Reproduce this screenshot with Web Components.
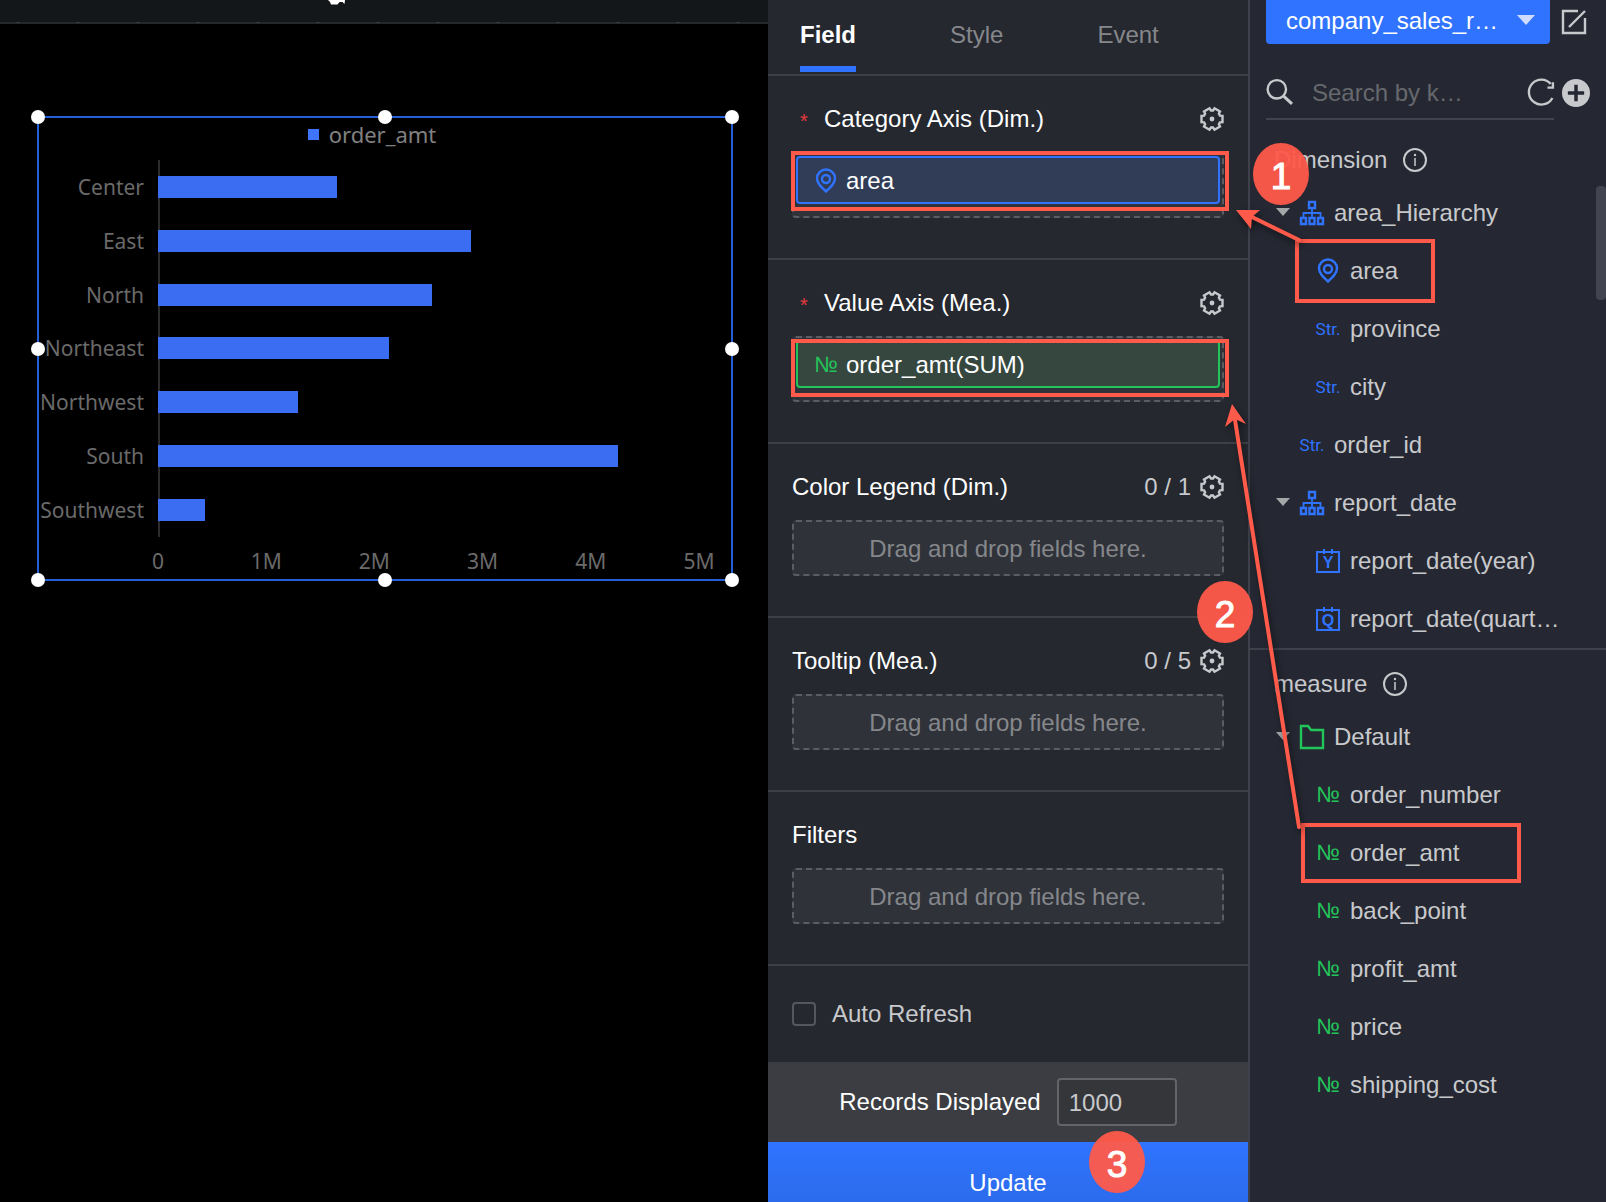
<!DOCTYPE html>
<html lang="en">
<head>
<meta charset="utf-8">
<title>Chart editor</title>
<style>
  body {
    margin: 0;
    background: #000;
    color: #c8c9cc;
    font: 24px/32px "Liberation Sans", Arial, sans-serif;
  }
</style>
</head>
<body>
<editor-app>
  <stage-canvas slot="stage">
    <selection-frame>
      <bar-chart series="order_amt" max="5000000"></bar-chart>
    </selection-frame>
  </stage-canvas>

  <config-panel slot="config">
    <field-section heading="Category Axis (Dim.)" required gear>
      <drop-zone filled><field-chip kind="dim" icon="pin">area</field-chip></drop-zone>
    </field-section>
    <field-section heading="Value Axis (Mea.)" required gear>
      <drop-zone filled><field-chip kind="mea" icon="number">order_amt(SUM)</field-chip></drop-zone>
    </field-section>
    <field-section heading="Color Legend (Dim.)" count="0 / 1" gear>
      <drop-zone>Drag and drop fields here.</drop-zone>
    </field-section>
    <field-section heading="Tooltip (Mea.)" count="0 / 5" gear>
      <drop-zone>Drag and drop fields here.</drop-zone>
    </field-section>
    <field-section heading="Filters">
      <drop-zone>Drag and drop fields here.</drop-zone>
    </field-section>
  </config-panel>

  <dataset-panel slot="dataset">
    <field-group heading="Dimension" scrollable>
      <field-row icon="hierarchy" parent>area_Hierarchy</field-row>
      <field-row icon="pin" level="2">area</field-row>
      <field-row icon="string" level="2">province</field-row>
      <field-row icon="string" level="2">city</field-row>
      <field-row icon="string">order_id</field-row>
      <field-row icon="hierarchy" parent>report_date</field-row>
      <field-row icon="year" level="2">report_date(year)</field-row>
      <field-row icon="quarter" level="2">report_date(quart…</field-row>
    </field-group>
    <field-group heading="measure">
      <field-row icon="folder" parent>Default</field-row>
      <field-row icon="number" level="2">order_number</field-row>
      <field-row icon="number" level="2">order_amt</field-row>
      <field-row icon="number" level="2">back_point</field-row>
      <field-row icon="number" level="2">profit_amt</field-row>
      <field-row icon="number" level="2">price</field-row>
      <field-row icon="number" level="2">shipping_cost</field-row>
    </field-group>
  </dataset-panel>

  <guide-overlay slot="guide"></guide-overlay>
</editor-app>

<script>
// Outline of a cog with six teeth, centred in a 24px box
function gearPath() {
  const points = [];
  for (let i = 0; i < 6; i++) {
    const mid = i * 60;
    [[-23, 8.6], [-17, 11], [17, 11], [23, 8.6]].forEach(([offset, radius]) => {
      const angle = (mid + offset) * Math.PI / 180;
      points.push(`${(12 + radius * Math.cos(angle)).toFixed(1)} ${(12 + radius * Math.sin(angle)).toFixed(1)}`);
    });
  }
  return `M${points.join('L')}Z`;
}

const CALENDAR = '<path d="M1 3h22v20H1zM8 0v5M16 0v5" fill="none" stroke="currentColor" stroke-width="2"/>';

const ICONS = {
  gear: `<path d="${gearPath()}" fill="none" stroke="currentColor" stroke-width="2.400"/><circle cx="12" cy="12" r="2.4" fill="currentColor"/>`,
  pin: '<path d="M12 22.500C7.500 18.500 3 14.500 3 9.500a9 9 0 0 1 18 0c0 5-4.500 9-9 13z" fill="none" stroke="currentColor" stroke-width="2.400"/><circle cx="12" cy="10" r="4" fill="none" stroke="currentColor" stroke-width="2.400"/>',
  hierarchy: '<path d="M9 1h6v6H9zM1 17h5v6H1zM9.500 17h5v6h-5zM18 17h5v6h-5z" fill="none" stroke="currentColor" stroke-width="2.400"/><path d="M12 8v8M3.500 16v-4h17v4" fill="none" stroke="currentColor" stroke-width="1.800"/>',
  folder: '<path d="M1 1h7l3 4h12v18H1z" fill="none" stroke="currentColor" stroke-width="2.400"/>',
  year: `${CALENDAR}<text x="12" y="19" text-anchor="middle" font-size="16" font-weight="bold" fill="currentColor">Y</text>`,
  quarter: `${CALENDAR}<text x="12" y="19" text-anchor="middle" font-size="16" font-weight="bold" fill="currentColor">Q</text>`,
  info: '<circle cx="12" cy="12" r="11" fill="none" stroke="currentColor" stroke-width="2"/><path d="M12 10v8" stroke="currentColor" stroke-width="1.500"/><circle cx="12" cy="7" r="1.200" fill="currentColor"/>',
  edit: '<path d="M16 1H1v22h22V8M7 17L23 1" fill="none" stroke="currentColor" stroke-width="2.400"/>',
  search: '<circle cx="10" cy="9.500" r="8.500" fill="none" stroke="currentColor" stroke-width="2.200"/><path d="M16 15.500l8 7.500" stroke="currentColor" stroke-width="2.800"/>',
  refresh: '<path d="M22.500 17.500A11.500 11.500 0 1 1 21 4.500" fill="none" stroke="currentColor" stroke-width="2.200"/><path d="M23 3v5h-5" fill="none" stroke="currentColor" stroke-width="2.200"/>',
  add: '<circle cx="12" cy="12" r="12" fill="currentColor"/><path d="M12 5v14M5 12h14" stroke="#252832" stroke-width="3"/>'
};

const TEXT_ICONS = { string: 'Str.', number: '№' };

const ICON_COLORS = {
  pin: '#2f73ff', hierarchy: '#2f73ff', string: '#2f73ff', year: '#2f73ff', quarter: '#2f73ff',
  folder: '#22c55a', number: '#22c55a'
};

class UiIcon extends HTMLElement {
  connectedCallback() {
    const name = this.getAttribute('name');
    const color = ICON_COLORS[name] || 'inherit';
    const body = TEXT_ICONS[name]
      ? `<span class="${name}">${TEXT_ICONS[name]}</span>`
      : `<svg viewBox="0 0 24 24" aria-hidden="true">${ICONS[name]}</svg>`;
    this.attachShadow({ mode: 'open' }).innerHTML = `
      <style>
        :host { display: flex; flex: none; align-items: center; justify-content: center; width: var(--icon-size, 24px); height: var(--icon-size, 24px); color: ${color}; }
        svg { width: 100%; height: 100%; overflow: visible; font-family: "Liberation Sans", Arial, sans-serif; }
        .string { font: 17px/24px Roboto, sans-serif; }
        .number { font: 22px/24px "Liberation Sans", Arial, sans-serif; }
      </style>
      ${body}
    `;
  }
}

class EditorApp extends HTMLElement {
  constructor() {
    super();
    this.attachShadow({ mode: 'open' }).innerHTML = `
      <style>
        :host { position: relative; display: grid; grid-template-columns: minmax(0, 1fr) 480px 358px; height: 100vh; overflow: hidden; }
      </style>
      <slot name="stage"></slot>
      <slot name="config"></slot>
      <slot name="dataset"></slot>
      <slot name="guide"></slot>
    `;
  }
}

class StageCanvas extends HTMLElement {
  constructor() {
    super();
    this.attachShadow({ mode: 'open' }).innerHTML = `
      <style>
        :host { display: block; background: #000; }
        header { position: relative; box-sizing: border-box; height: 24px; background: #141719; border-bottom: 2px solid #252728; }
        /* ruler marks along the lower edge */
        header::after { content: ""; position: absolute; left: 0; right: 0; bottom: -1px; height: 1px; background: repeating-linear-gradient(90deg, transparent 0 16px, #3c3e40 16px 20px, transparent 20px 60px); }
        header svg { position: absolute; left: 326px; top: 0; width: 20px; height: 8px; }
        .area { padding: 92px 35px 0 37px; }
      </style>
      <header>
        <svg viewBox="0 0 20 8" aria-hidden="true"><path d="M2 0h17l-.500 4-2-2h-3l-2 2.500H5L4 2z" fill="#fff"/></svg>
      </header>
      <div class="area"><slot></slot></div>
    `;
  }
}

class SelectionFrame extends HTMLElement {
  constructor() {
    super();
    const spots = [[0, 0], [50, 0], [100, 0], [0, 50], [100, 50], [0, 100], [50, 100], [100, 100]];
    const handles = spots.map(([x, y]) => `<i style="left:${x}%;top:${y}%"></i>`).join('');
    this.attachShadow({ mode: 'open' }).innerHTML = `
      <style>
        :host { position: relative; display: block; border: 2px solid #245fd8; height: 461px; }
        .handles { position: absolute; inset: -1px; }
        i { position: absolute; width: 14px; height: 14px; margin: -7px; border-radius: 50%; background: #fff; }
      </style>
      <slot></slot>
      <div class="handles">${handles}</div>
    `;
  }
}

class BarChart extends HTMLElement {
  connectedCallback() {
    const max = Number(this.getAttribute('max'));
    const rows = [
      ['Center', 1655000], ['East', 2890000], ['North', 2535000], ['Northeast', 2135000],
      ['Northwest', 1290000], ['South', 4250000], ['Southwest', 435000]
    ];
    this.attachShadow({ mode: 'open' }).innerHTML = `
      <style>
        :host { display: grid; grid-template: 32px 10px minmax(0, 1fr) 42px / 105px 14px minmax(0, 1fr) 32px; height: 100%; color: #6a6a6a; font: 21px/24px "Noto Sans", sans-serif; }
        .legend { grid-area: 1 / 1 / 2 / -1; display: flex; align-items: center; justify-content: center; gap: 10px; padding-right: 26px; color: #808080; font-size: 22px; }
        .legend::before { content: ""; width: 11px; height: 11px; background: #3f74ff; }
        .labels { grid-area: 3 / 1; display: grid; grid-auto-rows: 1fr; align-items: center; justify-items: end; }
        .labels span { white-space: nowrap; }
        .bars { grid-area: 3 / 3; display: grid; grid-auto-rows: 1fr; align-items: center; box-shadow: inset 2px 0 #2c2c2c; }
        .bars div { height: 22px; background: #3a6df2; }
        .ticks { grid-area: 4 / 3; display: flex; justify-content: space-between; padding-top: 12px; }
        .ticks span { display: flex; justify-content: center; width: 0; }
      </style>
      <div class="legend">${this.getAttribute('series')}</div>
      <div class="labels">${rows.map(([name]) => `<span>${name}</span>`).join('')}</div>
      <div class="bars">${rows.map(([, value]) => `<div style="width:${value / max * 100}%"></div>`).join('')}</div>
      <div class="ticks">${['0', '1M', '2M', '3M', '4M', '5M'].map(t => `<span>${t}</span>`).join('')}</div>
    `;
  }
}

class ConfigPanel extends HTMLElement {
  constructor() {
    super();
    this.attachShadow({ mode: 'open' }).innerHTML = `
      <style>
        :host { display: block; background: #25282f; }
        nav { display: flex; gap: 94px; box-sizing: border-box; height: 76px; padding: 0 32px; border-bottom: 2px solid #3d4044; }
        nav button { box-sizing: border-box; height: 72px; padding: 4px 0 0; border: 0; border-bottom: 6px solid transparent; background: none; color: #85878b; font: inherit; }
        nav .active { border-color: #2f73ff; color: #fff; font-weight: bold; }
        .refresh { display: flex; align-items: center; gap: 16px; height: 96px; padding: 0 24px; }
        .refresh input { appearance: none; box-sizing: border-box; width: 24px; height: 24px; margin: 0; border: 2px solid #55575c; border-radius: 4px; }
        .records { display: flex; align-items: center; justify-content: center; gap: 16px; height: 80px; background: #3b3d42; color: #fff; }
        .records input { box-sizing: border-box; width: 120px; height: 48px; padding: 2px 10px 0; border: 2px solid #626468; border-radius: 4px; background: #34363a; color: #c8c9cc; font: inherit; }
        .update { display: block; width: 100%; height: 80px; padding: 2px 0 0; border: 0; background: linear-gradient(#2f74ff, #2c6bec 75%); color: #fff; font: inherit; }
      </style>
      <nav>
        <button class="active">Field</button>
        <button>Style</button>
        <button>Event</button>
      </nav>
      <slot></slot>
      <div class="refresh">
        <input type="checkbox" id="auto"><label for="auto">Auto Refresh</label>
      </div>
      <div class="records">
        <label for="records">Records Displayed</label><input type="text" id="records" value="1000">
      </div>
      <button class="update">Update</button>
    `;
  }
}

class FieldSection extends HTMLElement {
  connectedCallback() {
    const star = this.hasAttribute('required') ? '<span class="star">*</span>' : '';
    const gear = this.hasAttribute('gear') ? '<button aria-label="Settings"><ui-icon name="gear"></ui-icon></button>' : '';
    this.attachShadow({ mode: 'open' }).innerHTML = `
      <style>
        :host { display: block; padding: 27px 24px 40px; border-bottom: 2px solid #3d4044; }
        header { display: flex; align-items: center; height: 32px; margin-bottom: 17px; }
        .star { box-sizing: border-box; width: 32px; padding: 4px 0 0 8px; color: #e5393c; font-size: 20px; line-height: 24px; }
        h2 { flex: 1; margin: 0; color: #fff; font: inherit; }
        button { display: flex; margin-left: 9px; padding: 0; border: 0; background: none; color: inherit; }
      </style>
      <header>${star}<h2>${this.getAttribute('heading')}</h2><span>${this.getAttribute('count') || ''}</span>${gear}</header>
      <slot></slot>
    `;
  }
}

class DropZone extends HTMLElement {
  constructor() {
    super();
    this.attachShadow({ mode: 'open' }).innerHTML = `
      <style>
        :host { display: block; box-sizing: border-box; padding: 11px 2px 9px; border: 2px dashed #5b5d62; border-radius: 4px; background: #2f3239; color: #85878b; text-align: center; }
        :host([filled]) { padding: 2px 2px 12px; text-align: left; }
      </style>
      <slot></slot>
    `;
  }
}

class FieldChip extends HTMLElement {
  connectedCallback() {
    this.attachShadow({ mode: 'open' }).innerHTML = `
      <style>
        :host { display: flex; align-items: center; gap: 8px; box-sizing: border-box; height: 48px; padding: 1px 16px 0; border: 2px solid #2f73ff; border-radius: 4px; background: #313c57; color: #fff; }
        :host([kind="mea"]) { border-color: #22c55a; background: #36473f; }
      </style>
      <ui-icon name="${this.getAttribute('icon')}"></ui-icon><slot></slot>
    `;
  }
}

class DatasetPanel extends HTMLElement {
  constructor() {
    super();
    this.attachShadow({ mode: 'open' }).innerHTML = `
      <style>
        :host { display: block; border-left: 2px solid #3e414a; background: #252832; }
        .bar { display: flex; align-items: center; gap: 12px; height: 44px; padding: 0 20px 0 16px; }
        .pick { position: relative; flex: 1; min-width: 0; height: 44px; }
        .pick::after { content: ""; position: absolute; right: 15px; top: 15px; border: solid transparent; border-width: 10px 9px 0; border-top-color: #cfdcff; }
        select { appearance: none; width: 100%; height: 44px; padding: 0 40px 2px 20px; border: 0; border-radius: 0 0 4px 4px; background: #2f73ff; color: #fff; font: inherit; }
        button { display: flex; padding: 0; border: 0; background: none; color: inherit; }
        .search { display: flex; align-items: flex-start; gap: 8px; height: 76px; padding: 0 16px; margin-bottom: 6px; box-sizing: border-box; }
        .box { display: flex; flex: 1; min-width: 0; align-items: center; box-sizing: border-box; height: 76px; padding-top: 22px; border-bottom: 2px solid #41444e; --icon-size: 26px; }
        input { flex: 1; min-width: 0; height: 32px; padding: 2px 0 0 20px; border: 0; background: none; color: inherit; font: inherit; }
        input::placeholder { color: #66686e; opacity: 1; }
        .add { margin-top: 35px; --icon-size: 28px; }
      </style>
      <div class="bar">
        <div class="pick"><select aria-label="Dataset"><option>company_sales_r…</option></select></div>
        <button aria-label="Edit"><ui-icon name="edit"></ui-icon></button>
      </div>
      <div class="search">
        <div class="box">
          <ui-icon name="search"></ui-icon>
          <input type="text" placeholder="Search by k…" aria-label="Search">
          <button aria-label="Refresh"><ui-icon name="refresh"></ui-icon></button>
        </div>
        <button class="add" aria-label="Add"><ui-icon name="add"></ui-icon></button>
      </div>
      <slot></slot>
    `;
  }
}

class FieldGroup extends HTMLElement {
  connectedCallback() {
    this.attachShadow({ mode: 'open' }).innerHTML = `
      <style>
        :host { position: relative; display: block; padding-top: 10px; }
        :host([scrollable]) { border-bottom: 2px solid #3e414a; }
        /* scroll thumb */
        :host([scrollable])::after { content: ""; position: absolute; right: 0; top: 60px; width: 10px; height: 114px; border-radius: 4px; background: #42454f; }
        header { display: flex; align-items: center; gap: 16px; height: 48px; padding-left: 24px; }
      </style>
      <header><span>${this.getAttribute('heading')}</span><ui-icon name="info"></ui-icon></header>
      <slot></slot>
    `;
  }
}

class FieldRow extends HTMLElement {
  connectedCallback() {
    this.attachShadow({ mode: 'open' }).innerHTML = `
      <style>
        :host { display: flex; align-items: center; gap: 10px; height: 58px; padding-left: 50px; white-space: nowrap; }
        :host([level="2"]) { padding-left: 66px; }
        :host([parent]) { padding-left: 26px; }
        .caret { display: none; border: solid transparent; border-width: 8px 7px 2px; border-top-color: #a5a6a8; }
        :host([parent]) .caret { display: block; }
      </style>
      <span class="caret"></span><ui-icon name="${this.getAttribute('icon')}"></ui-icon><slot></slot>
    `;
  }
}

// Numbered walkthrough marks; pinned to the right so they stay over the side panels
class GuideOverlay extends HTMLElement {
  constructor() {
    super();
    const steps = [[513, 174], [457, 612], [349, 1162]];
    const badges = steps.map(([x, y], i) => `
      <ellipse cx="${x}" cy="${y}" rx="28" ry="31" fill="#ff5a4a" opacity=".95"/>
      <text x="${x}" y="${y + 15}">${i + 1}</text>`).join('');
    this.attachShadow({ mode: 'open' }).innerHTML = `
      <style>
        :host { position: absolute; top: 0; right: 0; pointer-events: none; }
        svg { display: block; overflow: visible; }
        text { font: 37px "Liberation Sans", Arial, sans-serif; text-anchor: middle; fill: #fff; stroke: #fff; stroke-width: 1; }
        .boxes { fill: none; stroke: #ff5a4a; stroke-width: 4; }
        .arrows { filter: drop-shadow(2px 4px 3px rgba(0, 0, 0, .5)); }
        .arrows line { stroke: #ff5a4a; stroke-width: 4; stroke-linecap: round; }
        .arrows path { fill: #ff5a4a; }
      </style>
      <svg width="838" height="1202" viewBox="0 0 838 1202" aria-hidden="true">
        <g class="boxes">
          <rect x="25" y="153" width="434" height="56"/>
          <rect x="25" y="341" width="434" height="54"/>
          <rect x="529" y="241" width="136" height="60"/>
          <rect x="535" y="825" width="216" height="56"/>
        </g>
        <g class="arrows">
          <line x1="531" y1="240" x2="484" y2="217"/>
          <path d="M468 210l24 0-8 7-1 12z"/>
          <line x1="531" y1="827" x2="467" y2="420"/>
          <path d="M464 404l14 20-11-5-10 8z"/>
        </g>
        ${badges}
      </svg>
    `;
  }
}

customElements.define('ui-icon', UiIcon);
customElements.define('editor-app', EditorApp);
customElements.define('stage-canvas', StageCanvas);
customElements.define('selection-frame', SelectionFrame);
customElements.define('bar-chart', BarChart);
customElements.define('config-panel', ConfigPanel);
customElements.define('field-section', FieldSection);
customElements.define('drop-zone', DropZone);
customElements.define('field-chip', FieldChip);
customElements.define('dataset-panel', DatasetPanel);
customElements.define('field-group', FieldGroup);
customElements.define('field-row', FieldRow);
customElements.define('guide-overlay', GuideOverlay);
</script>
</body>
</html>
